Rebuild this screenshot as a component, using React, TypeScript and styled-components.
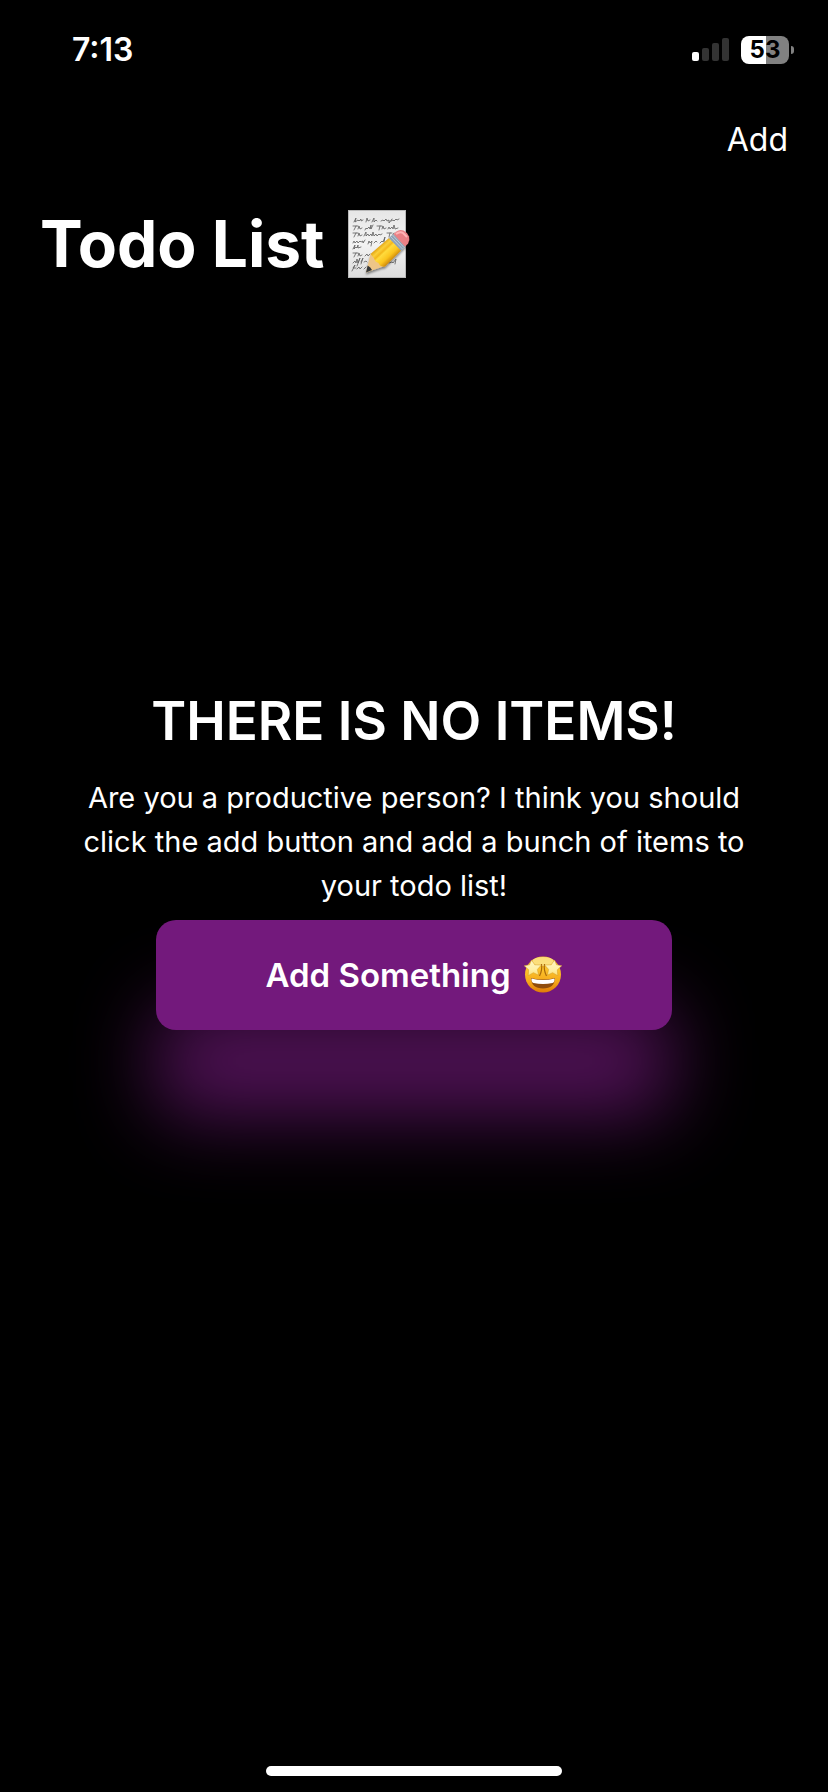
import React from "react";
import styled, { createGlobalStyle } from "styled-components";

const GlobalStyle = createGlobalStyle`
  *, *::before, *::after { box-sizing: border-box; }
  body {
    margin: 0;
    background: #000;
    color: #fff;
    font-family: Inter, "Liberation Sans", sans-serif;
  }
`;

const Screen = styled.div`
  display: flex;
  flex-direction: column;
  min-height: 100vh;
  overflow-x: hidden;
`;

const StatusBar = styled.div`
  display: flex;
  align-items: center;
  justify-content: space-between;
  height: 100px;
  padding: 0 34px 0 72px;
`;

const Clock = styled.time`
  font-size: 32px;
  line-height: 40px;
  font-weight: 600;
`;

const StatusIcons = styled.div`
  display: flex;
  align-items: center;
  gap: 12px;
`;

const Battery = styled.div`
  display: flex;
  align-items: center;
  gap: 2px;
`;

const BatteryBody = styled.span<{ $level: number }>`
  width: 48px;
  height: 28px;
  border-radius: 8px;
  background: linear-gradient(
    to right,
    #fff ${(p) => p.$level}%,
    #818181 ${(p) => p.$level}%
  );
  color: #000;
  font-size: 24px;
  line-height: 28px;
  font-weight: 700;
  text-align: center;
`;

const BatteryCap = styled.span`
  width: 3px;
  height: 8px;
  border-radius: 0 4px 4px 0;
  background: #818181;
`;

const NavBar = styled.nav`
  display: flex;
  align-items: center;
  justify-content: flex-end;
  height: 80px;
  padding: 0 40px;
`;

const NavLink = styled.a`
  color: #fff;
  font-size: 32px;
  line-height: 40px;
  text-decoration: none;
`;

const TitleRow = styled.header`
  display: flex;
  align-items: center;
  gap: 22px;
  padding: 22px 40px;
`;

const Title = styled.h1`
  margin: 0;
  font-size: 64px;
  line-height: 84px;
  font-weight: 700;
`;

const EmptyState = styled.main`
  display: flex;
  flex-direction: column;
  padding: 380px 80px 120px;
  text-align: center;
`;

const Heading = styled.h2`
  margin: 0 0 22px;
  font-size: 53px;
  line-height: 66px;
  font-weight: 600;
`;

const Message = styled.p`
  margin: 0 0 12px;
  font-size: 29px;
  line-height: 44px;
`;

const AddButton = styled.button`
  display: flex;
  align-items: center;
  justify-content: center;
  gap: 12px;
  height: 110px;
  margin: 0 76px;
  border: 0;
  border-radius: 20px;
  background: #73197c;
  box-shadow: 0 86px 80px rgba(115, 25, 124, 0.7);
  color: #fff;
  font-family: inherit;
  font-size: 33px;
  line-height: 40px;
  font-weight: 600;
  cursor: pointer;
`;

const HomeIndicator = styled.div`
  width: 296px;
  height: 10px;
  margin: auto auto 16px;
  border-radius: 5px;
  background: #fff;
`;

function SignalIcon() {
  return (
    <svg width="37" height="24" viewBox="0 0 37 24" role="img" aria-label="Signal strength">
      <rect x="0" y="14" width="7" height="9" rx="2" fill="#fff" />
      <rect x="10" y="10" width="7" height="13" rx="2" fill="#333" />
      <rect x="20" y="5" width="7" height="18" rx="2" fill="#333" />
      <rect x="30" y="0" width="7" height="23" rx="2" fill="#333" />
    </svg>
  );
}

function MemoIcon() {
  return (
    <svg width="64" height="72" viewBox="0 0 64 72" role="img" aria-label="Memo">
      <defs>
        <linearGradient id="paper" x1="0" y1="0" x2="0" y2="1">
          <stop offset="0" stopColor="#e6e6e6" />
          <stop offset="0.5" stopColor="#f3f3f3" />
          <stop offset="1" stopColor="#dcdcdc" />
        </linearGradient>
        <linearGradient id="wood" gradientUnits="userSpaceOnUse" x1="33" y1="37" x2="46" y2="51">
          <stop offset="0" stopColor="#e0a012" />
          <stop offset="0.2" stopColor="#fbd03a" />
          <stop offset="0.35" stopColor="#f3b71c" />
          <stop offset="0.45" stopColor="#ffdb3c" />
          <stop offset="0.75" stopColor="#fbc41e" />
          <stop offset="1" stopColor="#cf8a0a" />
        </linearGradient>
        <filter id="pencilShadow" x="-20%" y="-20%" width="140%" height="140%">
          <feDropShadow dx="0" dy="2" stdDeviation="1" floodOpacity="0.45" />
        </filter>
      </defs>
      <rect x="1.5" y="2.5" width="57" height="67" fill="url(#paper)" stroke="#b9b9b9" />
      <g fill="none" stroke="#5c5c5c" strokeWidth="0.8" strokeLinecap="round" strokeLinejoin="round">
        <path d="M7 14l2-4-1 4 3-2 1 1 2-2 0 2 2-1M19 14l1-4 1 3 2-1M25 14l2-4 0 4 2-2 1 1M34 13l2-1 1 1 2-2 1 2 2-1 0 3 3-4M44 13l2-1 1 1 2-2 1 1 2-1" />
        <path d="M6 18h5M9 18l-2 4M11 21l1-3 1 3 2-1M18 22l1-2 1 1 2-2 1 2 1-4 0 4 2-4M30 18h5M33 18l-1 4M35 21l1-3 1 3 2-1M41 21l1-2 1 2 2-2 1 2 1-4 1 4 3-1" />
        <path d="M6 25h5M9 25l-2 4M11 28l1-3 1 3 2-1M17 28l2-4 0 4 2-2 1 2 2-2 1 2 1-4 1 4 2-2 1 2 2-2 1 1 2-1M40 25h5M43 25l-1 4M45 28l2-3" />
        <path d="M6 35l1-2 1 2 2-2 1 2 2-2 1 1 2-1 0 2 2-3M21 36l1-3 1 2 2-2-1 5M27 35l2-2 1 1M33 35l2-2 1 1 2-5-1 5" />
        <path d="M6 41l2-4-1 4 2-2 1 1 1-3 0 3 3-1" />
        <path d="M6 45h5M9 45l-2 4M11 48l1-3 1 3 2-1M18 48l2-2 1 2 2-2" />
        <path d="M6 55l2-2 1 2 1-4 1 4 2-5-3 8M14 54l2-4-2 6M17 54l2-1 1 1M42 55l3-1 1 1 3-4-1 5" />
        <path d="M5 63l3-6-2 3h3M10 61l2-2 1 2 2-2M17 61l2-2" />
      </g>
      <g filter="url(#pencilShadow)">
        <path d="M19 64.500L23.500 46l14 12z" fill="#edc587" />
        <path d="M23.500 46L42 30l12 12.500L38 58.500q-3 .5-5-1-1-3-4.500-4-1.500-4-5-7.500z" fill="url(#wood)" />
        <path d="M19 64.500l1.700-7q3 1.500 4.300 4.500z" fill="#303438" />
        <path d="M42 30l4.500-4L58 38.500l-4 4z" fill="#8fa3b6" />
        <path d="M43.500 28.500L55.500 41M45.500 27L57 39.500" stroke="#bccad6" strokeWidth="1" fill="none" />
        <path d="M46.500 26l3-2.500q3-2.500 7-1 4 2 5.500 6 1 4-1 7L58 38.500z" fill="#ea8085" />
        <path d="M49 26q4-3 7-1l4 4" fill="none" stroke="#ffb3b5" strokeWidth="2" />
      </g>
    </svg>
  );
}

function StarStruckIcon() {
  return (
    <svg width="40" height="40" viewBox="0 0 40 40" role="img" aria-label="Star-struck face">
      <defs>
        <linearGradient id="face" x1="0" y1="0" x2="0" y2="1">
          <stop offset="0" stopColor="#eeb024" />
          <stop offset="0.35" stopColor="#fcc32c" />
          <stop offset="0.7" stopColor="#f5a81a" />
          <stop offset="1" stopColor="#df7c08" />
        </linearGradient>
        <linearGradient id="star" x1="0" y1="0" x2="0" y2="1">
          <stop offset="0" stopColor="#fff6c4" />
          <stop offset="0.6" stopColor="#fff0a6" />
          <stop offset="1" stopColor="#fde078" />
        </linearGradient>
        <path
          id="eyeStar"
          d="M-1.500-8L1.800-3.200 8.300-3 4.400 1.400 5.600 7.200.4 4.700-4.800 7.700-4.300 1.800-8.800-2.200-3.500-3.200z"
        />
      </defs>
      <circle cx="20" cy="19.500" r="18" fill="url(#face)" />
      <ellipse cx="20" cy="6.500" rx="11" ry="4.500" fill="#fff0a0" opacity="0.7" />
      <path d="M18.500 9q1 6-2 12M21.500 9q-1 6 2 12" fill="none" stroke="#a8690c" strokeWidth="1.200" />
      <path d="M8 23q12 3 24 0-.5 10.500-12 10.500T8 23z" fill="#8f4c0c" />
      <path d="M8.500 23.500q11.500 3 23 0 .3 3.800-2 4.500-9.500 2-19 0-2.300-.7-2-4.500z" fill="#fff" />
      <g fill="url(#star)" stroke="#d29a22" strokeWidth="0.500" strokeLinejoin="round">
        <use href="#eyeStar" transform="translate(10 13)" />
        <use href="#eyeStar" transform="translate(30 13) scale(-1 1)" />
      </g>
    </svg>
  );
}

export default function App() {
  return (
    <Screen>
      <GlobalStyle />
      <StatusBar>
        <Clock>7:13</Clock>
        <StatusIcons>
          <SignalIcon />
          <Battery>
            <BatteryBody $level={53}>53</BatteryBody>
            <BatteryCap />
          </Battery>
        </StatusIcons>
      </StatusBar>
      <NavBar>
        <NavLink href="#add">Add</NavLink>
      </NavBar>
      <TitleRow>
        <Title>Todo List</Title>
        <MemoIcon />
      </TitleRow>
      <EmptyState>
        <Heading>THERE IS NO ITEMS!</Heading>
        <Message>
          Are you a productive person? I think you should click the add button
          and add a bunch of items to your todo list!
        </Message>
        <AddButton type="button">
          Add Something
          <StarStruckIcon />
        </AddButton>
      </EmptyState>
      <HomeIndicator />
    </Screen>
  );
}
